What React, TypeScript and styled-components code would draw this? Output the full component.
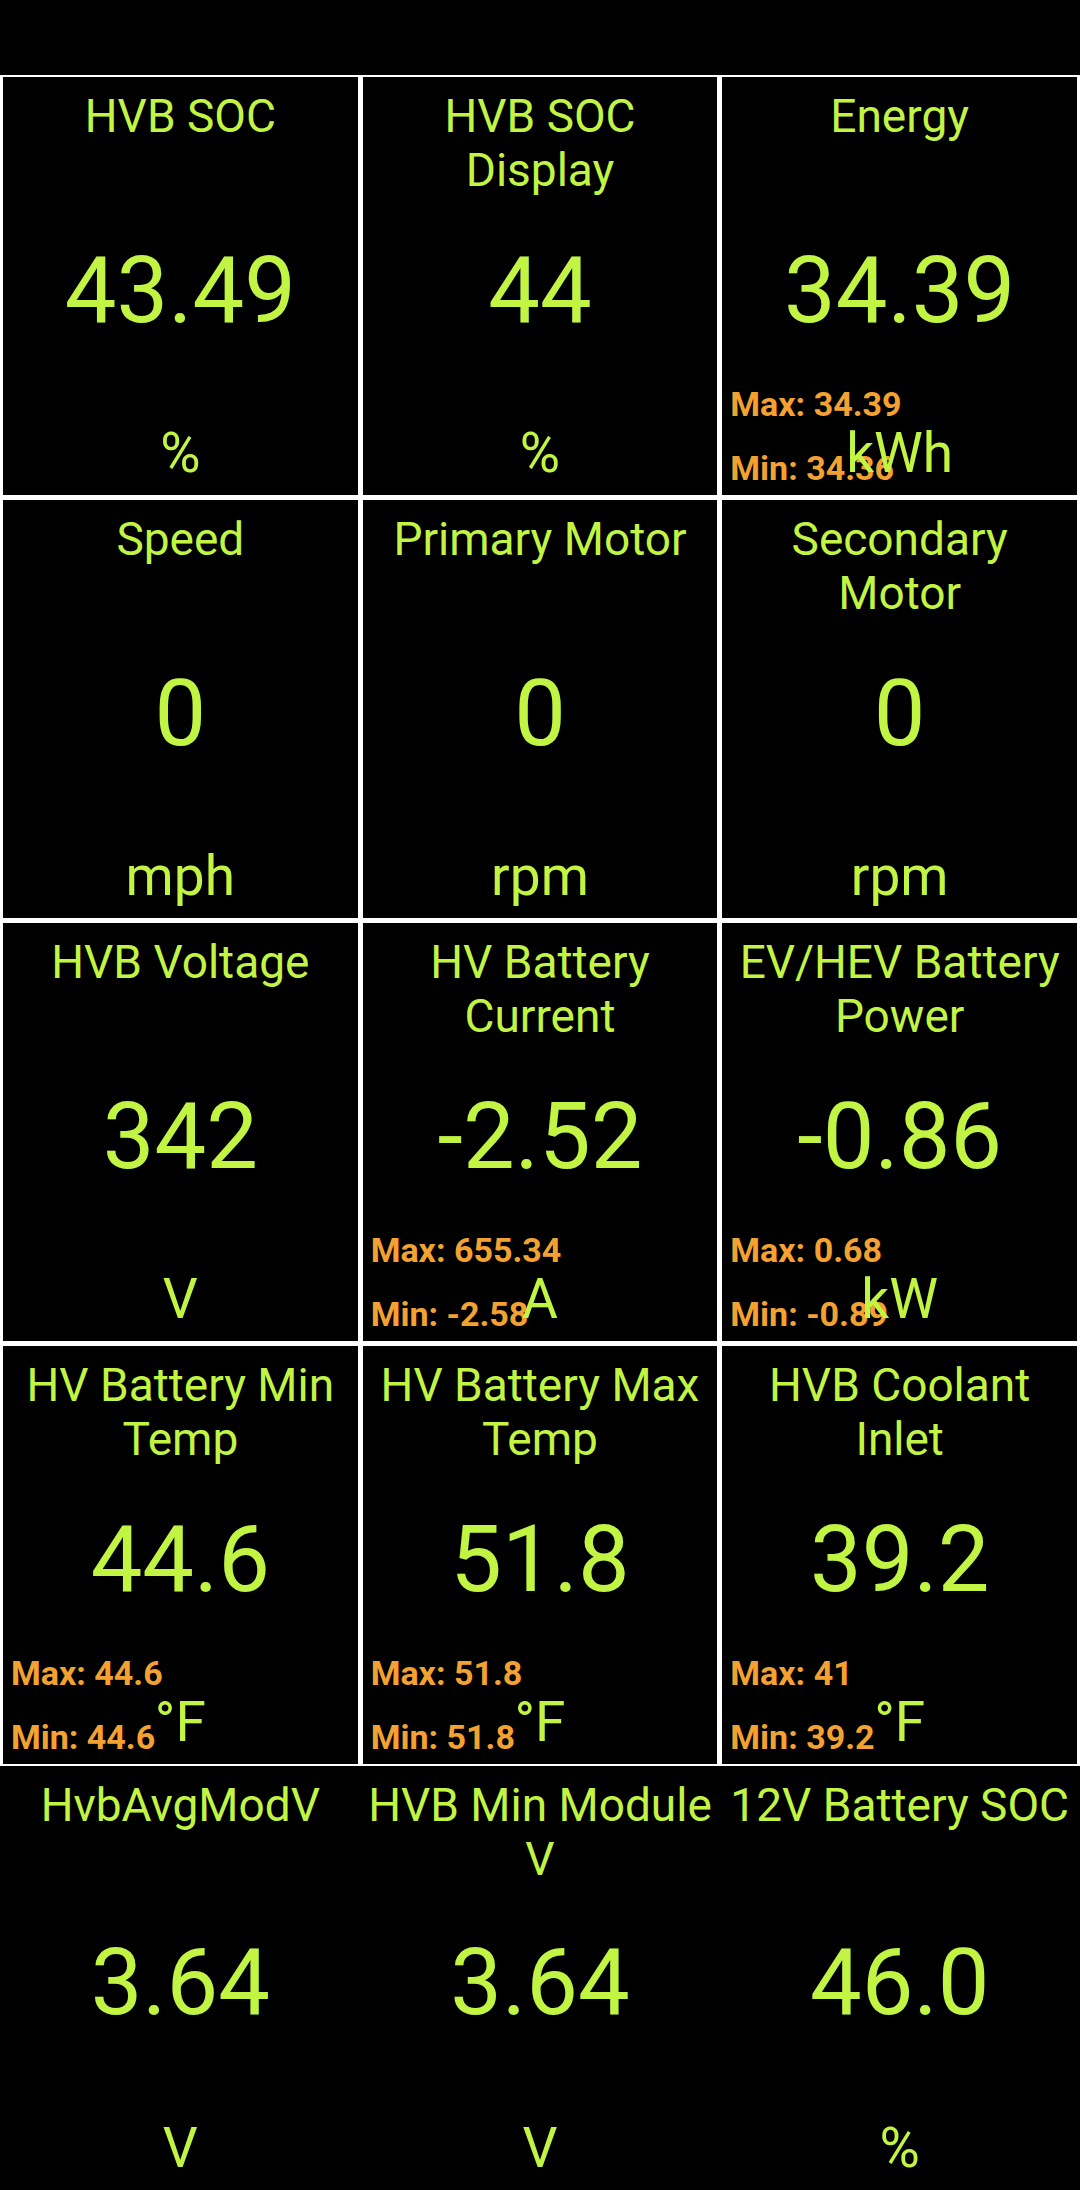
import React from "react";
import styled, { createGlobalStyle } from "styled-components";

const GREEN = "#c2f543";
const ORANGE = "#f3a232";

const Global = createGlobalStyle`
  html, body {
    margin: 0;
    padding: 0;
    background: #000;
  }
  body {
    font-family: Roboto, "Noto Sans", "Liberation Sans", sans-serif;
  }
`;

const Screen = styled.div`
  width: 1080px;
  height: 2190px;
  background: #000;
  display: flex;
  flex-direction: column;
  overflow: hidden;
`;

const StatusBar = styled.div`
  height: 75px;
  flex: none;
  background: #000;
`;

const Board = styled.div`
  background: #fff;
  padding: 2px 3px;
  display: grid;
  grid-template-columns: repeat(3, minmax(0, 1fr));
  grid-auto-rows: 418px;
  gap: 5px;
`;

const LastRow = styled.div`
  background: #000;
  padding: 0 3px;
  display: grid;
  grid-template-columns: repeat(3, minmax(0, 1fr));
  grid-auto-rows: 424px;
  gap: 5px;
`;

const Cell = styled.div`
  background: #000;
  display: grid;
  grid-template-columns: minmax(0, 1fr);
  grid-template-rows: minmax(0, 1fr);
  overflow: hidden;
  color: ${GREEN};
  & > * {
    grid-area: 1 / 1;
  }
`;

const Title = styled.div`
  align-self: start;
  padding: 12px 2px 0;
  font-size: 46px;
  line-height: 54px;
  text-align: center;
  white-space: pre;
`;

const Value = styled.div`
  align-self: center;
  padding-top: 10px;
  font-size: 92px;
  line-height: 108px;
  text-align: center;
  white-space: nowrap;
`;

const Stats = styled.div`
  align-self: end;
  justify-self: start;
  margin: 0 0 7px 8px;
  display: flex;
  flex-direction: column;
  gap: 24px;
  color: ${ORANGE};
  font-weight: 700;
  font-size: 34px;
  line-height: 40px;
  white-space: nowrap;
`;

const Unit = styled.div`
  align-self: end;
  padding-bottom: 10px;
  font-size: 55px;
  line-height: 64px;
  text-align: center;
  white-space: nowrap;
`;

type Gauge = {
  title: string;
  value: string;
  unit: string;
  max?: string;
  min?: string;
};

const grid: Gauge[] = [
  { title: "HVB SOC", value: "43.49", unit: "%" },
  { title: "HVB SOC\nDisplay", value: "44", unit: "%" },
  { title: "Energy", value: "34.39", unit: "kWh", max: "34.39", min: "34.36" },
  { title: "Speed", value: "0", unit: "mph" },
  { title: "Primary Motor", value: "0", unit: "rpm" },
  { title: "Secondary\nMotor", value: "0", unit: "rpm" },
  { title: "HVB Voltage", value: "342", unit: "V" },
  { title: "HV Battery\nCurrent", value: "-2.52", unit: "A", max: "655.34", min: "-2.58" },
  { title: "EV/HEV Battery\nPower", value: "-0.86", unit: "kW", max: "0.68", min: "-0.89" },
  { title: "HV Battery Min\nTemp", value: "44.6", unit: "°F", max: "44.6", min: "44.6" },
  { title: "HV Battery Max\nTemp", value: "51.8", unit: "°F", max: "51.8", min: "51.8" },
  { title: "HVB Coolant\nInlet", value: "39.2", unit: "°F", max: "41", min: "39.2" },
];

const last: Gauge[] = [
  { title: "HvbAvgModV", value: "3.64", unit: "V" },
  { title: "HVB Min Module\nV", value: "3.64", unit: "V" },
  { title: "12V Battery SOC", value: "46.0", unit: "%" },
];

function GaugeCell({ g }: { g: Gauge }) {
  return (
    <Cell>
      <Title>{g.title}</Title>
      <Value>{g.value}</Value>
      {g.max !== undefined && (
        <Stats>
          <span>Max: {g.max}</span>
          <span>Min: {g.min}</span>
        </Stats>
      )}
      <Unit>{g.unit}</Unit>
    </Cell>
  );
}

export default function App() {
  return (
    <>
      <Global />
      <Screen>
        <StatusBar />
        <Board>
          {grid.map((g, i) => (
            <GaugeCell key={i} g={g} />
          ))}
        </Board>
        <LastRow>
          {last.map((g, i) => (
            <GaugeCell key={i} g={g} />
          ))}
        </LastRow>
      </Screen>
    </>
  );
}
